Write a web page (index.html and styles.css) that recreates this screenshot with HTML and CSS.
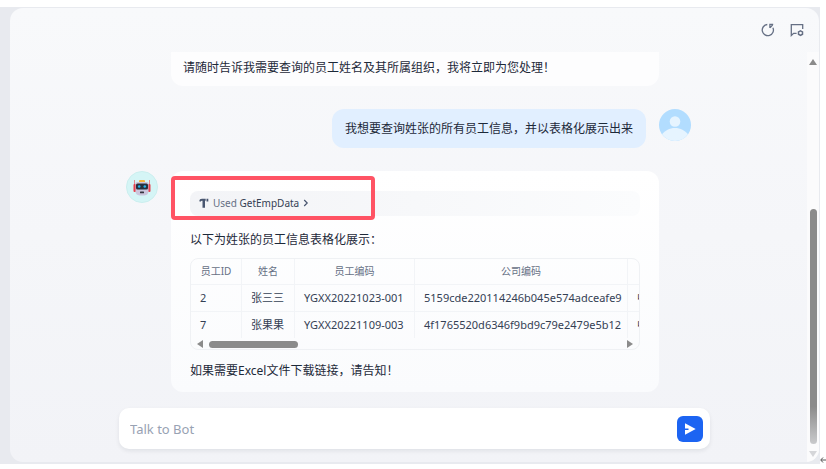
FILE: index.html
```html
<!DOCTYPE html>
<html lang="zh-CN">
  <head>
    <meta charset="UTF-8" />
    <meta name="viewport" content="width=device-width, initial-scale=1.0" />
    <title>Talk to Bot</title>
    <link rel="stylesheet" href="styles.css">
  </head>
  <body>
    <div class="page">
      <div class="frame">
        <main class="panel">
          <header class="toolbar">
            <button class="icon-btn" aria-label="Restart">
              <svg width="14" height="14" viewBox="0 0 14 14" fill="none" stroke="#667085" stroke-width="1.3">
                <path d="M6.300 1.500A5.600 5.600 0 1 0 11.900 4.700" />
                <path d="M8.900 4.900V1.400h3.300M9 4.800l2.700-2.900" />
              </svg>
            </button>
            <button class="icon-btn" aria-label="Chat settings">
              <svg width="14" height="14" viewBox="0 0 14 14" fill="none" stroke="#667085" stroke-width="1.3">
                <path d="M12.700 6V1.700H1.300v10.800l2.300-2.200h3" />
                <path d="M10.500 7.800l2 1.100v2.300l-2 1.100-2-1.100V8.900z" stroke-width="1.500" />
              </svg>
            </button>
          </header>

          <section class="chat">
            <div class="messages">
              <div class="row">
                <div class="bubble bubble-cut">请随时告诉我需要查询的员工姓名及其所属组织，我将立即为您处理！</div>
              </div>

              <div class="row row-user">
                <div class="bubble-user">我想要查询姓张的所有员工信息，并以表格化展示出来</div>
                <svg class="avatar" viewBox="0 0 32 32">
                  <circle cx="16" cy="16" r="16" fill="#b2ddff" />
                  <circle cx="16" cy="12.5" r="5.3" fill="#e6f4ff" />
                  <path d="M3 25.3C6 21.5 10.5 19 16 19s10 2.500 13 6.300A16 16 0 0 1 3 25.300z" fill="#e6f4ff" />
                </svg>
              </div>

              <div class="row">
                <svg class="avatar" viewBox="0 0 32 32">
                  <circle cx="16" cy="16" r="15.5" fill="#d5f5f6" stroke="#cbeeee" />
                  <path d="M8.500 9v6M23.500 9v6" stroke="#e58a90" />
                  <rect x="7.500" y="13" width="2.500" height="8" rx="1" fill="#e8404c" />
                  <rect x="22" y="13" width="2.500" height="8" rx="1" fill="#e8404c" />
                  <rect x="13" y="9" width="6" height="3" rx="1" fill="#f5b53c" />
                  <path d="M9.500 12.500Q9.500 11 11 11h10q1.500 0 1.500 1.500V20q0 4-4 4.500h-5q-4-.5-4-4.500z" fill="#cbc6dc" />
                  <rect x="10" y="12.500" width="12" height="6" rx="1.500" fill="#26303d" />
                  <circle cx="13.200" cy="15.500" r="1.300" fill="#27b4ea" />
                  <circle cx="18.800" cy="15.500" r="1.300" fill="#27b4ea" />
                  <rect x="14" y="20.500" width="4" height="1.800" rx=".5" fill="#37343f" />
                </svg>
                <div class="bubble bubble-answer">
                  <button class="tool">
                    <svg width="10" height="10" viewBox="0 0 10 10" fill="#495670">
                      <path d="M.3 3.300C.3 1.600 1.400.8 3 .8h3.700v2H6v7H3.500v-7C2.300 2.800 1.800 3 1.500 3.700z" />
                      <path d="M7.500.8h1.800v2.700H7.500z" />
                    </svg>
                    <span>Used <b>GetEmpData</b></span>
                    <svg width="6" height="8" viewBox="0 0 6 8" fill="none" stroke="#495670" stroke-width="1.2">
                      <path d="M1.200 1l3 3-3 3" />
                    </svg>
                  </button>
                  <p>以下为姓张的员工信息表格化展示：</p>
                  <div class="table-box">
                    <table>
                      <thead>
                        <tr>
                          <th class="col-id">员工ID</th>
                          <th class="col-name">姓名</th>
                          <th class="col-code">员工编码</th>
                          <th class="col-company">公司编码</th>
                          <th class="col-org"></th>
                        </tr>
                      </thead>
                      <tbody>
                        <tr>
                          <td>2</td>
                          <td>张三三</td>
                          <td>YGXX20221023-001</td>
                          <td>5159cde220114246b045e574adceafe9</td>
                          <td>中</td>
                        </tr>
                        <tr>
                          <td>7</td>
                          <td>张果果</td>
                          <td>YGXX20221109-003</td>
                          <td>4f1765520d6346f9bd9c79e2479e5b12</td>
                          <td>中</td>
                        </tr>
                      </tbody>
                    </table>
                    <div class="scroll-x">
                      <i class="arrow-left"></i>
                      <span class="track"><i class="thumb-x"></i></span>
                      <i class="arrow-right"></i>
                    </div>
                  </div>
                  <p>如果需要Excel文件下载链接，请告知！</p>
                  <div class="highlight"></div>
                </div>
              </div>
            </div>
            <div class="scroll-y">
              <i class="arrow-up"></i>
              <i class="thumb-y"></i>
              <i class="arrow-down"></i>
            </div>
          </section>

          <form class="composer">
            <input type="text" placeholder="Talk to Bot" aria-label="Talk to Bot" />
            <button type="button" class="send" aria-label="Send">
              <svg width="12" height="12" viewBox="0 0 12 12" fill="#fff">
                <path d="M1 .3L11.700 6 1 11.700V7h3.500V5.500H1z" />
              </svg>
            </button>
          </form>
        </main>
      </div>
      <svg class="return-mark" width="6" height="6" viewBox="0 0 6 6" fill="none" stroke="#555">
        <path d="M6 3H1M3 .5L.7 3 3 5.500" />
      </svg>
    </div>
  </body>
</html>
```

FILE: styles.css
```css
* {
  box-sizing: border-box;
}
body {
  margin: 0;
  background: #fff;
  font-family: "Noto Sans", "Noto Sans CJK SC", sans-serif;
  font-size: 12px;
  line-height: 18px;
  color: #1d2939;
}
button {
  border: 0;
  padding: 0;
  background: none;
  font: inherit;
  cursor: pointer;
}
p {
  margin: 0;
}
.page {
  position: relative;
  height: 100vh;
  padding: 7px 6px 5px 0;
}
.frame {
  height: 100%;
  padding: 1px 1px 2px 10px;
  background: #e8eaef;
}
.panel {
  position: relative;
  display: flex;
  flex-direction: column;
  height: 100%;
  overflow: hidden;
  border-radius: 13px;
  background: linear-gradient(#f8f9fb, #f2f3f7);
}
.toolbar {
  display: flex;
  justify-content: flex-end;
  gap: 15px;
  flex: none;
  height: 44px;
  padding: 15px 15px 0 0;
}
.icon-btn {
  width: 14px;
  height: 14px;
}
.icon-btn svg {
  display: block;
}
.chat {
  display: flex;
  flex: 1;
  min-height: 0;
}
.messages {
  flex: 1;
  max-width: 565px;
  margin: 0 auto;
}
.row {
  display: flex;
  gap: 13px;
  margin-bottom: 23px;
}
.avatar {
  flex: none;
  width: 32px;
  height: 32px;
}
.bubble {
  position: relative;
  flex: 1;
  min-width: 0;
  margin-right: 32px;
  border-radius: 12px;
  background: #fdfdfe;
}
.bubble-cut {
  margin-left: 45px;
  padding: 7px 12px 9px;
  border-radius: 0 0 12px 12px;
}
.row-user {
  justify-content: flex-end;
}
.bubble-user {
  padding: 11px 13px 10px;
  border-radius: 12px;
  background: #e1efff;
}
.bubble-answer {
  padding: 20px 19px 12px;
  background: linear-gradient(#fff, #fafbfd);
}
.tool {
  display: flex;
  align-items: center;
  gap: 4px;
  width: 100%;
  height: 25px;
  margin-bottom: 15px;
  padding: 0 9px 1px;
  border-radius: 8px;
  background: linear-gradient(90deg, #f3f4f7, #fbfcfd);
  font-size: 10px;
  color: #667085;
}
.tool b {
  font-weight: 400;
  color: #344054;
}
.table-box {
  margin: 9px 0 12px;
  height: 92px;
  overflow: hidden;
  border: 1px solid #eff1f4;
  border-radius: 8px;
}
table {
  width: 560px;
  table-layout: fixed;
  border-spacing: 0;
}
th,
td {
  height: 27px;
  padding: 0 9px 1px;
  border: solid #f2f4f7;
  border-width: 0 1px 1px 0;
  text-align: left;
  white-space: nowrap;
  font-size: 11px;
  line-height: 16px;
  color: #344054;
}
th {
  height: 26px;
  text-align: center;
  font-size: 10px;
  font-weight: 400;
  color: #667085;
}
tr:last-child td {
  height: 26px;
  border-bottom: 0;
}
.col-id {
  width: 51px;
}
.col-name {
  width: 53px;
}
.col-code {
  width: 120px;
}
.col-company {
  width: 213px;
}
.scroll-x {
  display: flex;
  align-items: center;
  gap: 6px;
  height: 12px;
  padding: 0 6px;
}
.track {
  flex: 1;
}
.thumb-x {
  display: block;
  width: 89px;
  height: 7px;
  border-radius: 4px;
  background: #8b8b8b;
}
.arrow-left,
.arrow-right {
  border: solid transparent;
}
.arrow-left {
  border-width: 4px 6px 4px 0;
  border-right-color: #8b8b8b;
}
.arrow-right {
  border-width: 4px 0 4px 6px;
  border-left-color: #8b8b8b;
}
.highlight {
  position: absolute;
  top: 5px;
  left: 0;
  width: 204px;
  height: 44px;
  border: 4px solid #ff5364;
  border-radius: 4px;
}
.scroll-y {
  display: flex;
  flex-direction: column;
  align-items: center;
  width: 12px;
  padding: 7px 0 5px;
  background: #fbfbfc;
}
.arrow-up {
  border: solid transparent;
  border-width: 0 4px 6px;
  border-bottom-color: #8b8b8b;
}
.thumb-y {
  width: 7px;
  height: 59%;
  margin-top: auto;
  margin-bottom: 7px;
  border-radius: 4px;
  background: linear-gradient(#8b8b8b 84%, #c9cacc);
}
.arrow-down {
  border: solid transparent;
  border-width: 6px 4px 0;
  border-top-color: #d5d6d9;
}
/* the composer floats over the end of the conversation */
.composer {
  position: absolute;
  right: 0;
  bottom: 13px;
  left: 0;
  display: flex;
  align-items: center;
  max-width: 591px;
  height: 41px;
  margin: 0 auto;
  padding: 0 7px 0 11px;
  border-radius: 10px;
  background: #fff;
  box-shadow: 0 2px 4px rgba(16, 24, 40, 0.08);
}
.composer input {
  flex: 1;
  border: 0;
  padding: 0;
  outline: 0;
  background: none;
  font: inherit;
  font-size: 13px;
}
.composer input::placeholder {
  color: #98a2b3;
}
.send {
  display: flex;
  align-items: center;
  justify-content: center;
  width: 26px;
  height: 26px;
  border-radius: 6px;
  background: #1c64f2;
}
.return-mark {
  position: absolute;
  right: 0;
  bottom: 6px;
}
```
